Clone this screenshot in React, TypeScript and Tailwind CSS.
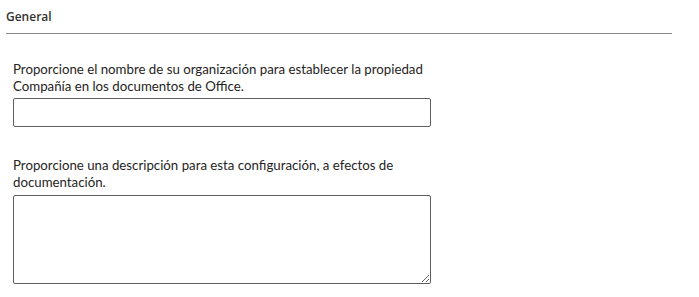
const fieldLabel = "text-[13.25px] leading-[17px] text-[#252423] font-['Lato',sans-serif]";

export default function App() {
  return (
    <div className="w-[699px] h-[297px] bg-white pl-[6px] pr-[27px] pt-[9px] font-['Open_Sans',sans-serif] overflow-hidden">
      <div className="text-[12px] leading-[16px] font-semibold text-[#323130] pb-[8px] border-b border-[#8a8886]">
        General
      </div>
      <div className="pl-[7px] pt-[27px] w-[440px]">
        <label className={`block w-[420px] ${fieldLabel}`}>
          Proporcione el nombre de su organización para establecer la propiedad Compañía en los documentos de Office.
        </label>
        <input
          type="text"
          className="mt-[3px] block w-[418px] h-[29px] border border-[#605e5c] rounded-[2px] outline-none px-2 text-[14px]"
        />
        <label className={`block w-[420px] mt-[30px] ${fieldLabel}`}>
          Proporcione una descripción para esta configuración, a efectos de documentación.
        </label>
        <textarea className="mt-[4px] block w-[418px] h-[89px] border border-[#605e5c] rounded-[2px] outline-none px-2 text-[14px]" />
      </div>
    </div>
  );
}
